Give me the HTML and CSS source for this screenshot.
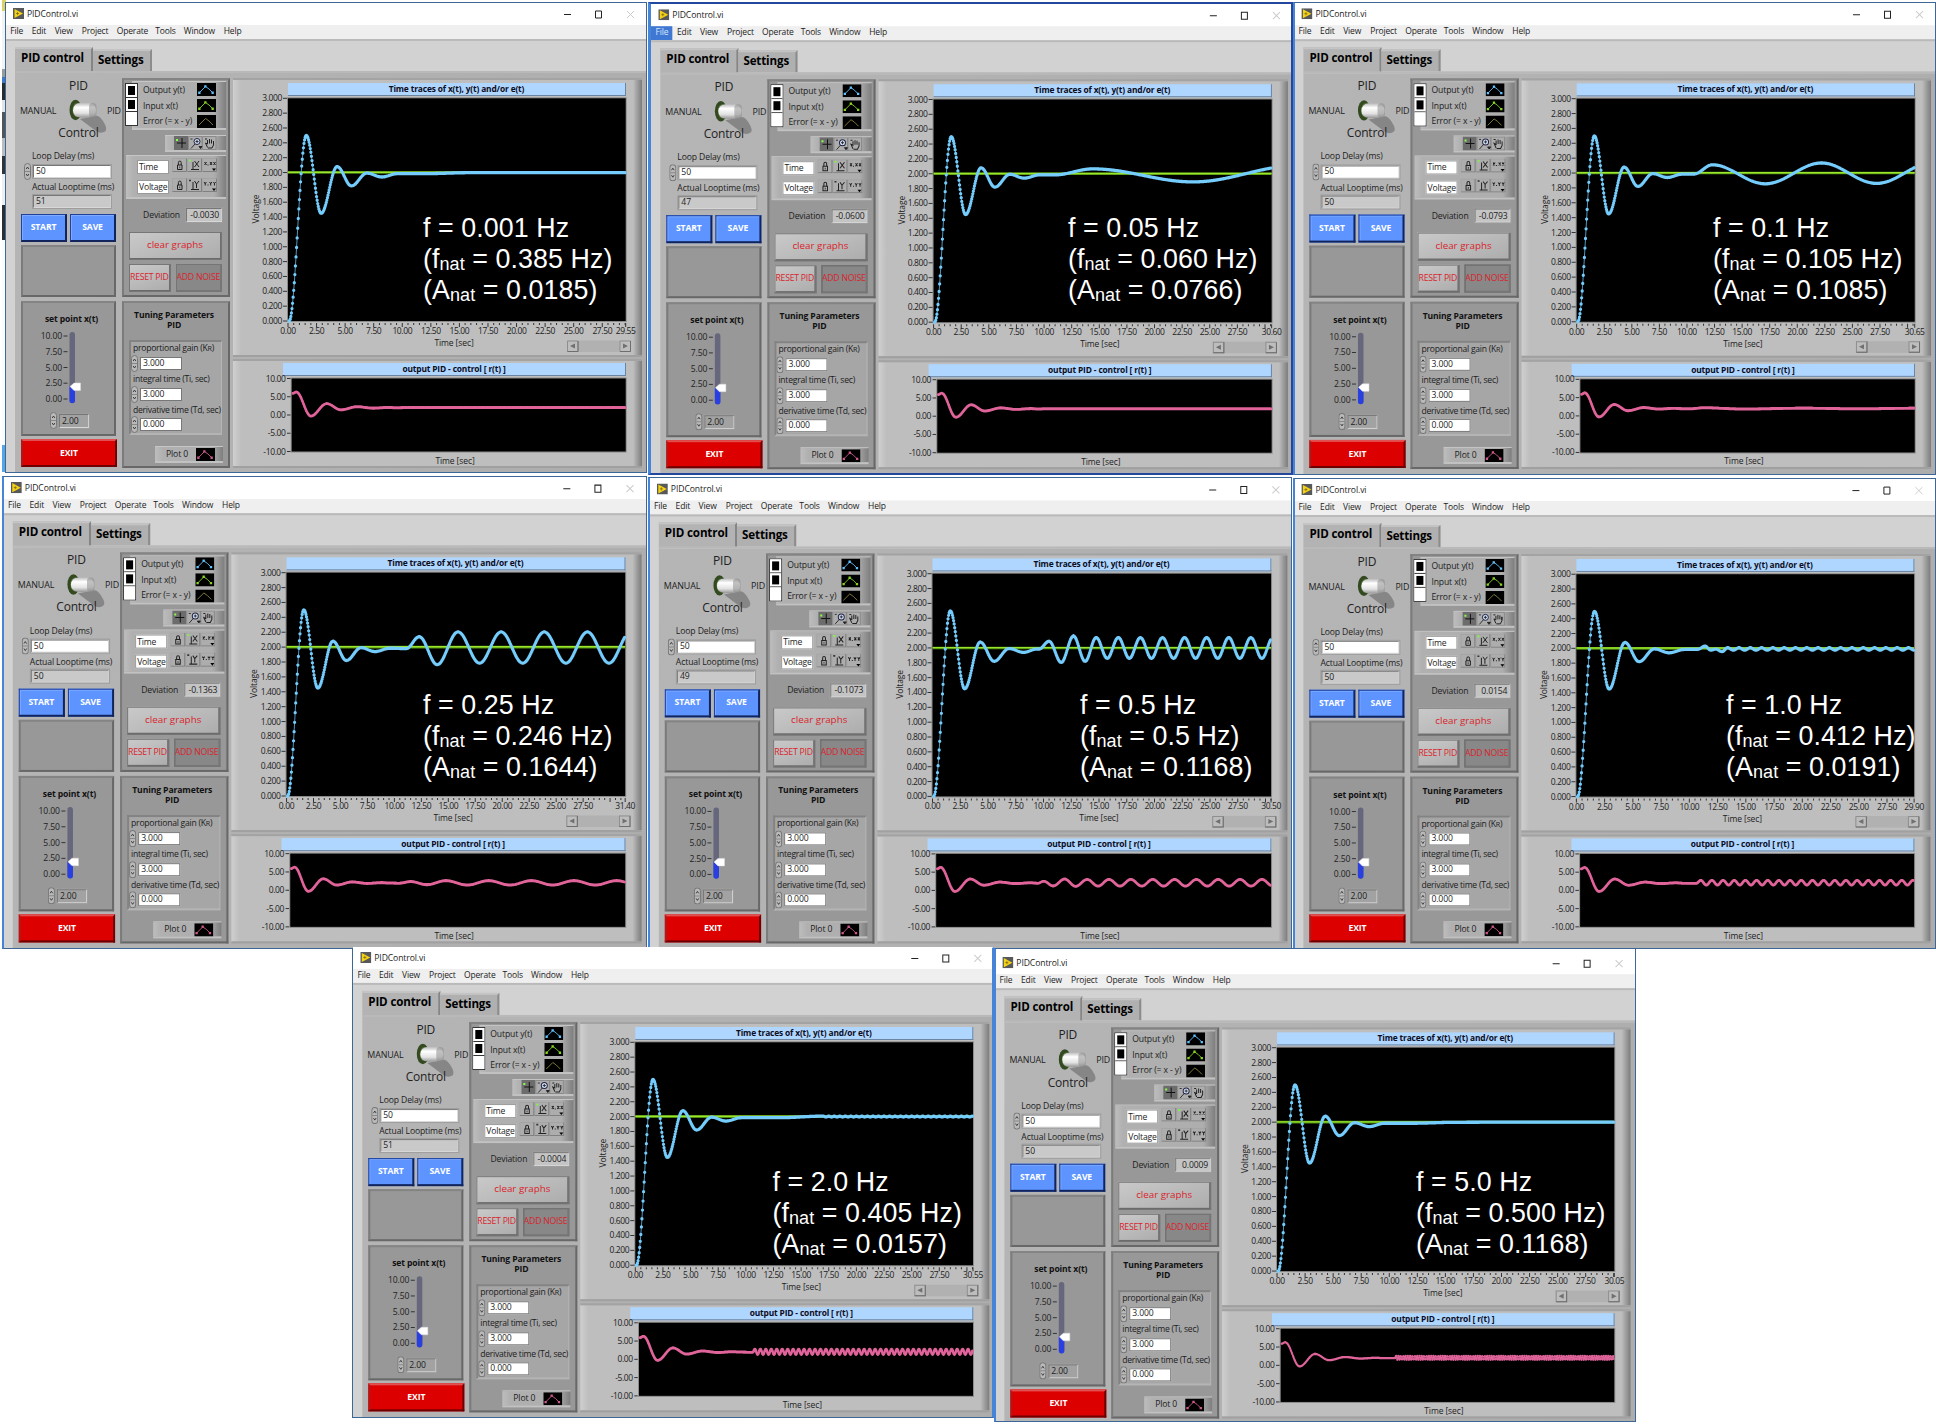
FILE: index.html
```html
<!DOCTYPE html>
<html lang="en">
<head>
<meta charset="utf-8">
<title>PIDControl.vi</title>
<link rel="stylesheet" href="styles.css">
</head>
<body>
<main class="desktop" id="desktop">
  <div class="sliver"></div>
</main>
<script src="app.js"></script>
</body>
</html>
```
FILE: styles.css
```css
* { box-sizing: border-box; }
body {
  margin: 0;
  background: #fff;
  font-family: "Open Sans", "Noto Sans", sans-serif;
  font-size: 8.6px;
  letter-spacing: -0.12px;
  color: #1c1c1c;
}
.desktop { position: relative; width: 1936px; height: 1424px; overflow: hidden; }
.sliver {
  position: absolute; left: 2px; top: 0; width: 4px; height: 472px;
  background: linear-gradient(#d9d268 0 11px, #f3f3f3 11px 69px, #9a9a9a 69px 77px, #3f78c8 77px 83px, #2b2b2b 83px 100px, #e4e4e4 100px 112px, #555 112px 138px, #bdbdbd 138px 156px, #333 156px 174px, #efefef 174px 205px, #2e2e2e 205px 240px, #fafafa 240px 445px, #57a5e6 445px);
}

/* windows on the desktop */
.win { position: absolute; overflow: hidden; background: #fff; border: 1px solid #3d6796; }
.win.active { border: 2px solid #23479c; border-left: 3px solid #4584d6; }
.win.blue-left { border-left: 2px solid #4584d6; }
.win.edge-right { border-top-color: #fff; border-right: 2px solid #4584d6; }
.vi { width: 642px; height: 471px; display: flex; flex-direction: column; transform-origin: 0 0; }
.title { height: 23px; flex: none; display: flex; align-items: center; padding: 0 10px 0 8px; background: #fff; font-size: 8.6px; }
.title .logo { width: 11px; height: 11px; margin-right: 3px; }
.title .name { flex: 1; letter-spacing: -0.1px; }
.title .sys { width: 76px; height: 10px; }
.menu { height: 14px; flex: none; display: grid; grid-template-columns: 21.5px 23px 27px 35px 38.5px 28.5px 40px 24px; padding-left: 0; background: #efefef; line-height: 12px; font-size: 8.5px; letter-spacing: -0.15px; }
.menu span { padding-left: 5.2px; white-space: nowrap; }
.menu .hot { background: #3f78d2; color: #d8e6ff; }
.front { flex: 1; background: #d2d2d2; border-top: 2px solid #bababa; padding: 6px 0 0 10px; display: flex; flex-direction: column; }
.tabs { display: flex; align-items: flex-end; height: 24px; flex: none; font-weight: 700; font-size: 11.6px; letter-spacing: -0.15px; color: #000; }
.tab { height: 22px; line-height: 18px; background: #b0b0b0; border-top: 2px solid #c4c4c4; border-right: 2px solid #8c8c8c; padding-left: 5px; width: 59px; white-space: nowrap; }
.tab.on { height: 25px; width: 78px; padding-left: 6px; background: #b3b3b3; border-right-color: #858585; margin-bottom: -1px; }
.page { flex: 1; display: grid; grid-template-columns: 107px 108px 409px; column-gap: 0; background: linear-gradient(100deg, #b5b5b5, #adadad); border-top: 2px solid #b9b9b9; padding-top: 5px; align-content: start; }
.col { display: flex; flex-direction: column; height: 390px; white-space: nowrap; }

/* left column */
.left { padding: 0 6px 0 6px; }
.mode { height: 69px; position: relative; display: grid; grid-template-rows: 16px 32px 16px; font-size: 8.9px; }
.mode .big { font-size: 12px; letter-spacing: -0.2px; text-align: center; line-height: 16px; padding-left: 15px; color: #222; }
.mode .ctl { line-height: 13px; }
.mode .row { display: flex; align-items: center; margin-left: -1px; }
.mode .row .m { width: 48px; }
.mode .row svg { width: 39px; height: 34px; overflow: visible; margin-top: 11px; }
.mode .row .p { margin-left: 0; }
.lab { height: 12px; line-height: 10px; padding-left: 11px; margin-top: 4px; }
.lab.act { margin-top: 2px; line-height: 11px; }
.num { display: flex; height: 17px; align-items: center; gap: 2px; padding-left: 3px; }
.spin { width: 7px; height: 17px; flex: none; }
.box { background: #fff; border: 1px solid #777; border-right-color: #cfcfcf; border-bottom-color: #d8d8d8; outline: 1px solid #9d9d9d; outline-offset: 0; height: 13px; line-height: 11px; padding-left: 2px; }
.box.ro { background: #c9c9c9; }
.num .box { flex: 1; margin-right: 5px; }
.act-box { margin: 1px 5px 1px 12px; height: 13px; }
.pair { display: flex; gap: 3px; margin-top: 5px; }
.btn { height: 28px; width: 46px; text-align: center; line-height: 25px; color: #fff; font-weight: 700; background: #5d94ff; border: 1px solid #20409a; border-right: 2px solid #12245c; border-bottom: 2px solid #12245c; box-shadow: inset 1px 1px 0 #7fabff; font-size: 8.6px; }
.sunk { background: #989898; border: 2px solid #7b7b7b; border-top-color: #848484; border-right-color: #686868; border-bottom-color: #686868; }
.blank { height: 52px; margin-top: 3px; width: 95px; }
.setp { height: 135px; width: 95px; margin-top: 4px; padding: 10px 0 0 0; }
.setp .h { font-weight: 700; text-align: center; line-height: 13px; height: 17px; padding-left: 6px; color: #111; }
.slider { display: block; width: 91px; height: 82px; overflow: visible; }
.setp .num { padding: 0 25px 0 27px; margin-top: 0; }
.setp .num .box { background: #a2a2a2; margin-right: 0; height: 14px; line-height: 12px; }
.exit { width: 96px; height: 28px; margin-top: 3px; background: #dc0000; color: #fff; font-weight: 700; text-align: center; line-height: 24px; border: 2px solid #b01818; border-top-color: #e05050; border-right-color: #6d0000; border-bottom-color: #6d0000; }

/* middle column */
.tools { height: 220px; width: 108px; padding: 2px 2px 0 1px; }
.legend { display: flex; height: 47px; }
.checks { width: 13px; height: 43px; border: 1px solid #333; background: #fff; display: grid; grid-template-rows: 1fr 1fr 1fr; margin-top: 1px; z-index: 1; }
.checks i { border-bottom: 1px solid #333; background: #fff; display: block; padding: 2px; }
.checks i b { display: block; width: 7px; height: 9px; background: #000; margin: 0 auto; }
.checks i:last-child { border: 0; }
.raised { background: linear-gradient(90deg, #bdbdbd, #b0b0b0 8px, #aeaeae calc(100% - 12px), #7e7e7e); border-top: 1px solid #c6c6c6; border-bottom: 2px solid #c2c2c2; }
.items { flex: 1; margin: -1px 0 -1px -6px; padding: 0 10px 0 11px; display: grid; grid-template-rows: 15.8px 15.8px 15.8px; }
.items div { display: flex; justify-content: space-between; align-items: center; }
.items svg, .plot0 svg { width: 19px; height: 13px; flex: none; }
.palette { width: 61px; height: 17px; margin: 5.5px 0 0 40px; padding: 0 0 0 9px; }
.palette svg { display: block; width: 43px; height: 14px; }
.scales { margin: 3.5px 0 0 1px; height: 44px; padding: 2px 0 0 11px; display: grid; grid-template-rows: 19.6px 20px; }
.scales div { display: flex; gap: 3px; }
.scales .box { width: 32px; height: 14px; line-height: 12px; outline: 0; margin-top: 2px; border-color: #999; padding-left: 1px; letter-spacing: -0.2px; }
.scales svg { width: 45px; height: 14px; }
.dev { display: flex; justify-content: flex-end; align-items: center; gap: 6px; height: 14px; margin: 9px 4px 0 0; }
.dev .box { width: 36px; height: 14px; line-height: 12px; text-align: right; padding-right: 2px; background: #c4c4c4; }
.gbtn { background: linear-gradient(160deg, #c9c9c9, #adadad); border: 1px solid #dcdcdc; border-right: 2px solid #6f6f6f; border-bottom: 2px solid #6a6a6a; outline: 1px solid #767676; outline-offset: -1px; color: #d9242c; text-align: center; line-height: 24px; height: 28px; }
.clear { margin: 10px 4px 0 4px; font-size: 9.8px; letter-spacing: 0; }
.two { display: flex; gap: 5px; margin: 4px 4px 0 4px; letter-spacing: -0.25px; }
.two .gbtn { width: 43px; font-size: 8.7px; white-space: nowrap; }
.two .gbtn.dn { width: 48px; background: #888; border-color: #616161; border-right-color: #777; border-bottom-color: #777; }
.tune { margin-top: 4px; height: 167px; width: 108px; padding: 7px 5px 0 5px; display: flex; flex-direction: column; }
.tune .h { text-align: center; font-weight: 700; line-height: 10px; height: 30px; color: #111; padding-right: 4px; }
.cluster { background: #a6a6a6; border: 2px solid #838383; border-right: 1px solid #b4b4b4; border-bottom-color: #b4b4b4; height: 95px; width: 93px; padding: 0; }
.cluster p { margin: 0; line-height: 12px; height: 13px; padding-left: 2px; letter-spacing: -0.26px; }
.cluster .num { padding: 0; height: 17.6px; gap: 2px; margin-top: -.5px; margin-bottom: .5px; }
.cluster .num .box { flex: none; width: 42px; outline: 0; border-color: #777; }
.plot0 { align-self: flex-end; display: flex; align-items: center; width: 68px; height: 17px; margin-top: 11px; padding-left: 11px; gap: 8px; }

/* right column */
.right { padding-left: 3px; width: 409px; }
.gp { background: linear-gradient(90deg, #cfcfcf, #bebebe 8px, #bebebe 400px, #7c7c7c 409px); border-top: 2px solid #a3a3a3; border-bottom: 2px solid #a0a0a0; width: 409px; }
.gp .bar { background: #afd6ff; border-bottom: 1px solid #6c84a0; border-right: 1px solid #6c84a0; text-align: center; font-weight: 700; line-height: 11px; height: 13px; color: #0c0c1c; font-size: 8.4px; letter-spacing: -0.15px; }
.g1 { height: 280px; padding-top: 3px; }
.g1 .bar { margin: 0 16px 0 55px; }
.g2 { height: 109px; margin-top: 2px; padding-top: 2px; }
.g2 .bar { margin: 0 16px 0 50px; }
.gp svg { display: block; overflow: visible; font-size: 8.5px; letter-spacing: -0.38px; fill: #1c1c1c; }

/* annotations laid over the graphs */
.note { position: absolute; color: #fff; font: 26.8px/31.4px "Liberation Sans", Arial, sans-serif; letter-spacing: 0.08px; white-space: nowrap; }
.note sub { font-size: 18px; line-height: 0; vertical-align: -2px; }
```
FILE: app.js
```js
// Each run: frame rectangle, origin and scale of the panel, readings, and annotation
const runs = [
  { f: [5, 2, 642, 471], o: [5, 2], s: [1, 1], cls: '', max: 29.55, loop: 51, dev: '-0.0030', note: [423, 212.5, '0.001', '0.385', '0.0185'] },
  { f: [648, 2, 645, 473], o: [650.3, 3.2], s: [1.001, 1], cls: 'active', hot: 1, max: 30.6, loop: 47, dev: '-0.0600', note: [1068, 212.5, '0.05', '0.060', '0.0766'],
    y: [[11, 1.985], [14.4, 2.065], [23.5, 1.89], [33, 2.11]] },
  { f: [1293, 2, 643, 473], o: [1293.4, 2.2], s: [1.001, 1.0017], cls: 'blue-left', max: 30.65, loop: 50, dev: '-0.0793', note: [1713, 212.5, '0.1', '0.105', '0.1085'],
    y: [[10.6, 1.985], [12.3, 2.11], [17.1, 1.855], [22.2, 2.135], [27.2, 1.86], [32.2, 2.135]], r: [[10, 1.9], [11.3, 2.2], [15, 1.85], [20.5, 2.1], [25.5, 1.9], [31, 2.1]] },
  { f: [2, 476, 645, 473], o: [2.75, 476.1], s: [1.0028, 1.0028], cls: 'blue-left', max: 31.4, loop: 50, dev: '-0.1363', note: [423, 689.5, '0.25', '0.246', '0.1644'],
    y: [[11.1, 1.98], [12.3, 2.14], [13.97, 1.765]], yp: [15.9, 2.205, 1.785, 4],
    r: [[10.2, 1.9], [11.3, 2.35], [12.8, 1.5]], rp: [14.6, 2.6, 1.4, 4] },
  { f: [648, 477, 644, 472], o: [648.8, 477.4], s: [1.0025, 1], cls: 'blue-left', max: 30.5, loop: 49, dev: '-0.1073', note: [1080, 689.5, '0.5', '0.5', '0.1168'],
    y: [[9.4, 1.985], [10.5, 2.09], [11.6, 1.805], [12.7, 2.16], [13.75, 1.82]], yp: [14.75, 2.14, 1.86, 1.99],
    r: [[9.2, 1.9], [9.8, 2.5], [10.65, 1.2], [11.7, 3.1], [12.7, 1.1]], rp: [13.75, 3, 1.15, 1.99] },
  { f: [1293, 478, 643, 471], o: [1293.4, 478.1], s: [1, 0.9983], cls: 'blue-left', max: 29.9, loop: 50, dev: '0.0154', note: [1726, 689.5, '1.0', '0.412', '0.0191'],
    y: [[10.7, 1.985], [11.4, 2.03], [11.9, 1.975], [12.35, 1.99], [12.9, 1.955]], yp: [13.4, 2.01, 1.975, 1],
    r: [[10.4, 1.9]], rp: [10.8, 2.75, 1.45, 1] },
  { f: [352, 947, 642, 471], o: [352.3, 945.9], s: [1, 1.001], cls: 'edge-right', max: 30.55, loop: 51, dev: '-0.0004', note: [772.5, 1166.5, '2.0', '0.405', '0.0157'],
    y: [[13, 1.985]], yp: [17, 2.006, 1.994, 0.5], r: [[10.4, 1.9]], rp: [10.6, 2.8, 1.3, 0.5] },
  { f: [994, 948, 642, 474], o: [994.4, 951.1], s: [0.9987, 1.003], cls: 'blue-left', max: 30.05, loop: 50, dev: '0.0009', note: [1416, 1166.5, '5.0', '0.500', '0.1168'],
    r: [[10.3, 1.95]], rp: [10.4, 2.6, 1.5, 0.21] }
];

const STEP_Y = [[0, 0], [0.1, 0], [1.6, 2.5], [2.9, 1.45], [4.3, 2.08], [5.55, 1.82], [6.9, 1.992], [8.2, 1.94], [9.6, 1.985]];
const STEP_R = [[0.1, 5.9], [0.4, 6.3], [1.7, -0.3], [3.1, 3.1], [4.35, 1.4], [5.8, 2.25], [7.2, 1.85], [8.6, 2.05], [9.2, 1.95]];

// Turning points of a trace: step response, then the forced part
function turning(step, extra, per, rest) {
  const pts = step.slice();
  (extra || []).forEach(p => pts.push(p));
  if (per) for (let t = per[0]; t < 34; t += per[3]) { pts.push([t, per[1]]); pts.push([t + per[3] / 2, per[2]]); }
  if (!per && !(extra && extra.length)) rest.forEach(p => pts.push(p));
  return pts.sort((a, b) => a[0] - b[0]);
}
function at(pts, t) {
  for (let i = 1; i < pts.length; i++) if (t <= pts[i][0]) {
    const a = pts[i - 1], b = pts[i], u = Math.max(0, (t - a[0]) / (b[0] - a[0]));
    return a[1] + (b[1] - a[1]) * (1 - Math.cos(Math.PI * u)) / 2;
  }
  return pts[pts.length - 1][1];
}
function samples(pts, max, fx, fy) {
  const out = [];
  for (let t = 0.1; t <= max; t += 0.05) out.push([fx(t).toFixed(2), fy(at(pts, t)).toFixed(2)]);
  return out;
}
const line = p => 'M' + p.map(q => q.join(' ')).join('L');
const dots = p => p.map(q => 'M' + q.join(' ') + 'h0').join('');

function mainGraph(run) {
  const X = 55, W = 337.7, Y = 2.3, H = 222.7, fx = t => X + t / run.max * W, fy = v => Y + H - v / 3 * H;
  const p = samples(turning(STEP_Y, run.y, run.yp, [[12, 1.985], [16, 1.998], [20, 2]]), run.max, fx, fy);
  let s = `<rect x="${X - 1}" y="${Y - 1}" width="${W + 2}" height="${H + 2}" fill="#8b8b8b"/><rect x="${X}" y="${Y}" width="${W}" height="${H}" fill="#000"/>`;
  for (let i = 0; i <= 15; i++) {
    const v = i * 0.2;
    s += `<text x="49" y="${fy(v) + 3}" text-anchor="end">${v.toFixed(3)}</text><path d="M50 ${fy(v)}h4" stroke="#333" stroke-width="1"/>`;
  }
  for (let t = 0; t <= run.max; t += 0.5) {
    const major = t % 2.5 === 0;
    s += `<path d="M${fx(t)} ${Y + H + 2}v${major ? 4 : 2}" stroke="#333" stroke-width="1"/>`;
    if (major && run.max - t > 1.5) s += `<text x="${fx(t)}" y="${Y + H + 13}" text-anchor="middle">${t.toFixed(2)}</text>`;
  }
  s += `<path d="M${X + W} ${Y + H + 2}v4" stroke="#333"/><text x="${X + W}" y="${Y + H + 13}" text-anchor="middle">${run.max.toFixed(2)}</text>`;
  s += `<path d="M${X} ${fy(2)}h${W}" stroke="#4f8f10" stroke-width="2.6"/><path d="M${X} ${fy(2) - 0.3}h${W}" stroke="#9be52a" stroke-width="1.4"/>`;
  s += `<path d="${line(p)}" fill="none" stroke="#62bdf0" stroke-width="0.8"/><path d="${dots(p)}" stroke="#74cdfd" stroke-width="3.3" stroke-linecap="round"/>`;
  s += `<text x="221" y="${Y + H + 25}" text-anchor="middle" letter-spacing="-.1">Time [sec]</text><text transform="translate(26 113) rotate(-90)" text-anchor="middle" letter-spacing="-.1">Voltage</text>`;
  s += `<g><rect x="334" y="244.500" width="64" height="11.500" fill="#b1b1b1"/><path d="M334.500 245h10.500v10.500h-10.500zM387 245h10.500v10.500H387z" fill="#bdbdbd" stroke="#8f8f8f"/><path d="M334.500 255.500h10.500V245M387 255.500h10.500V245" fill="none" stroke="#6e6e6e"/><path d="M342 247.500v5l-5-2.500zM390 247.500v5l5-2.500z" fill="#707070"/></g>`;
  return `<svg width="409" height="258">${s}</svg>`;
}
function outGraph(run) {
  const X = 58.7, W = 334, Y = 2.5, H = 73, fx = t => X + t / run.max * W, fy = v => Y + H / 2 - v / 20 * H;
  const p = samples(turning(STEP_R, run.r, run.rp, [[10, 2], [11, 2]]), run.max, fx, fy);
  let s = `<rect x="${X - 1}" y="${Y - 1}" width="${W + 2}" height="${H + 2}" fill="#8b8b8b"/><rect x="${X}" y="${Y}" width="${W}" height="${H}" fill="#000"/>`;
  for (const v of [10, 5, 0, -5, -10]) s += `<text x="52.500" y="${fy(v) + 3}" text-anchor="end">${v.toFixed(2)}</text><path d="M54 ${fy(v)}h3.500" stroke="#333"/>`;
  const fine = run.rp && run.rp[3] < 0.3;
  s += `<path d="${line(p)}" fill="none" stroke="#e0649a" stroke-width="${fine ? 0.9 : 1.6}"/><path d="${dots(p)}" stroke="#e0649a" stroke-width="${fine ? 2.3 : 2.8}" stroke-linecap="round"/>`;
  s += `<text x="222" y="${Y + H + 12}" text-anchor="middle" letter-spacing="-.1">Time [sec]</text>`;
  return `<svg width="409" height="90">${s}</svg>`;
}

const swatch = (c, d) => `<svg viewBox="0 0 19 13"><path d="M0 0h19v13H0z" fill="#000"/><path d="M2 10L8.500 3.500 12 6l4 4" fill="none" stroke="${c}" stroke-width=".9"/>${d ? `<path d="M1.200 8.600h2.300v2.300H1.200zM7.200 2.200h2.300v2.300H7.200zM14.500 8.600h2.300v2.300h-2.300z" fill="${c}"/>` : ''}</svg>`;
const spin = '<svg class="spin" viewBox="0 0 7 17"><rect x=".5" y=".5" width="6" height="16" rx="3" fill="#b9b9b9" stroke="#777"/><path d="M1 8.500h5" stroke="#888"/><path d="M2.200 6L3.500 4 4.800 6M2.200 11l1.300 2 1.300-2" fill="none" stroke="#333" stroke-width=".9"/></svg>';
const logo = '<svg class="logo" viewBox="0 0 11 11"><path d="M0 0h11v11H0z" fill="#57585a"/><path d="M1.500 1l8.500 4.500L1.500 10z" fill="#f6d214"/><path d="M3 5.500h3M4.500 4v3" stroke="#7a6a20" stroke-width=".8"/></svg>';
const sys = '<svg class="sys" viewBox="0 0 76 10"><path d="M3 5.500h7" stroke="#222"/><path d="M34.500 2h6v7h-6z" fill="none" stroke="#222"/><path d="M66 2l7 7M73 2l-7 7" stroke="#ccc"/></svg>';
const knob = `<svg viewBox="0 0 39 34"><path d="M12 20L27 17q4-1 8 5 6 9 1 11-4 2-8-1z" fill="#868686"/><ellipse cx="7.500" cy="11" rx="6" ry="10.200" fill="#33491f"/><ellipse cx="9" cy="11" rx="4.500" ry="7" fill="#5e7545"/><rect x="5" y="4" width="23" height="14.500" rx="7" fill="url(#kg)"/><rect x="21" y="4" width="7.500" height="14.500" rx="3.500" fill="#8e8e8e" opacity=".55"/></svg>`;
const tri = '<path d="M40 10.500h4l-2 2.500z"/>';
const frame3 = '<path d="M.5.5h14v13H.5zM15.500.5h14v13h-14zM30.500.5h14v13h-14z" fill="#adadad" stroke="#a4a4a4"/><path d="M.5 13.500h14V.5M15.500 13.500h14V.5M30.500 13.500h14V.5" fill="none" stroke="#808080"/>';
const lock = '<path d="M5.500 7h4.500v4.500H5.500zM6.400 7V4.500a1.400 1.400 0 0 1 2.800 0V7" fill="none" stroke="#222" stroke-width="1"/><path d="M7.750 8.500v1.800" stroke="#222" stroke-width=".8"/>';
const axisIcon = (c, lit, pts) => `<svg viewBox="0 0 45 14">${frame3}${lock}<path d="M17 2.500h2" stroke="${lit ? '#7f3' : '#333'}" stroke-width="1.600"/><path d="M21 4v7M19 11.500h8" stroke="#222"/>${c === 'x' ? '<path d="M22.500 3l4.500 6M27 3l-4.500 6" stroke="#222"/>' : '<path d="M22.500 3l2 3 2.500-3M24.500 6v4" stroke="#222" fill="none"/>'}${pts}${tri}</svg>`;
const fmtX = '<path d="M32.500 4l2 3M34.500 4l-2 3M38 4l2 3M40 4l-2 3M41.500 4l2 3M43.500 4l-2 3M36 6.500v1" stroke="#222"/>';
const fmtY = '<path d="M32 4l1.200 1.500L34.400 4M33.200 5v2.500M37.500 4l1.200 1.500L39.900 4M38.700 5v2.500M41.300 4l1.200 1.500L43.700 4M42.500 5v2.500M36 6.500v1" stroke="#222" fill="none"/>';
const palette = `<svg viewBox="0 0 43 14"><path d="M0 0h14v14H0z" fill="#6c6c6c"/><path d="M8 2v10M3 7h9" stroke="#111"/><path d="M2 4h2" stroke="#8f4" stroke-width="2"/><path d="M14.500.5h13.500v13H14.500zM28.500.5H42v13H28.500z" fill="#adadad" stroke="#8a8a8a"/><circle cx="23" cy="5.500" r="3" fill="#cfe0f5" stroke="#224"/><path d="M21 8l-4 4.500M23 4v3M21.500 5.500h3M16.500 3h2M25 10.500h3l-1.500 2z" stroke="#222" fill="#222" stroke-width=".9"/><path d="M31 3h2M33.500 11.500L31.500 7l2 1V4M35.500 7.500V3M37.500 7.500V3.500M39.500 8V5v4l-1.500 3h-4" fill="none" stroke="#222"/></svg>`;
function slider() {
  let s = '';
  [['10.00', 6], ['7.50', 21.7], ['5.00', 37.5], ['2.50', 53.2], ['0.00', 69]].forEach(([t, y]) => { s += `<text x="39" y="${y + 3}" text-anchor="end" fill="#222">${t}</text><path d="M40.500 ${y}h4" stroke="#333"/>`; });
  return `<svg class="slider" viewBox="0 0 91 82">${s}<rect x="46.500" y="2" width="5.500" height="71" rx="2.700" fill="#66667c"/><path d="M46.500 56h5.500v14.500a2.750 2.750 0 0 1-5.500 0z" fill="#2a3fe0"/><path d="M47 56.500l4-3.500h6.500v7.500H51z" fill="#fff" stroke="#ddd" stroke-width=".5"/></svg>`;
}

const num = (v, c = '') => `<div class="num">${spin}<div class="box ${c}">${v}</div></div>`;
function windowHtml(r) {
  const b = r.cls === 'active' ? [3, 2] : r.cls === 'blue-left' ? [2, 1] : [1, 1];
  const dx = r.o[0] - r.f[0] - b[0], dy = r.o[1] - r.f[1] - b[1];
  const menu = ['File', 'Edit', 'View', 'Project', 'Operate', 'Tools', 'Window', 'Help'].map((m, i) => `<span${r.hot && !i ? ' class="hot"' : ''}>${m}</span>`).join('');
  return `<section class="win ${r.cls}" style="left:${r.f[0]}px;top:${r.f[1]}px;width:${r.f[2]}px;height:${r.f[3]}px">
<div class="vi" style="transform:translate(${dx}px,${dy}px) scale(${r.s[0]},${r.s[1]})">
<header class="title">${logo}<span class="name">PIDControl.vi</span>${sys}</header>
<nav class="menu">${menu}</nav>
<div class="front">
<div class="tabs"><div class="tab on">PID control</div><div class="tab">Settings</div></div>
<div class="page">
<div class="col left">
<div class="mode"><div class="big">PID</div><div class="row"><span class="m">MANUAL</span>${knob}<span class="p">PID</span></div><div class="big ctl">Control</div></div>
<div class="lab">Loop Delay (ms)</div>${num('50')}
<div class="lab act">Actual Looptime (ms)</div><div class="box ro act-box">${r.loop}</div>
<div class="pair"><div class="btn">START</div><div class="btn">SAVE</div></div>
<div class="sunk blank"></div>
<div class="sunk setp"><div class="h">set point x(t)</div>${slider()}${num('2.00')}</div>
<div class="exit">EXIT</div>
</div>
<div class="col">
<div class="sunk tools">
<div class="legend"><div class="checks"><i><b></b></i><i><b></b></i><i></i></div><div class="raised items"><div>Output y(t)${swatch('#62c4ff', 1)}</div><div>Input x(t)${swatch('#86d81f', 1)}</div><div>Error (= x - y)${swatch('#8d8340', 0)}</div></div></div>
<div class="raised palette">${palette}</div>
<div class="raised scales"><div><span class="box">Time</span>${axisIcon('x', 1, fmtX)}</div><div><span class="box">Voltage</span>${axisIcon('y', 0, fmtY)}</div></div>
<div class="dev">Deviation<span class="box">${r.dev}</span></div>
<div class="gbtn clear">clear graphs</div>
<div class="two"><div class="gbtn">RESET PID</div><div class="gbtn dn">ADD NOISE</div></div>
</div>
<div class="sunk tune"><div class="h">Tuning Parameters<br>PID</div>
<div class="cluster"><p>proportional gain (K<small>R</small>)</p>${num('3.000')}<p>integral time (Ti, sec)</p>${num('3.000')}<p>derivative time (Td, sec)</p>${num('0.000')}</div>
<div class="raised plot0">Plot 0${swatch('#d0588c', 1)}</div></div>
</div>
<div class="col right">
<div class="gp g1"><div class="bar">Time traces of x(t), y(t) and/or e(t)</div>${mainGraph(r)}</div>
<div class="gp g2"><div class="bar">output PID - control [ r(t) ]</div>${outGraph(r)}</div>
</div>
</div></div></div></section>
<div class="note" style="left:${r.note[0]}px;top:${r.note[1]}px">f = ${r.note[2]} Hz<br>(f<sub>nat</sub> = ${r.note[3]} Hz)<br>(A<sub>nat</sub> = ${r.note[4]})</div>`;
}
const defs = '<svg width="0" height="0" style="position:absolute"><linearGradient id="kg" x2="0" y2="1"><stop offset="0" stop-color="#bbb"/><stop offset=".3" stop-color="#fff"/><stop offset=".7" stop-color="#e2e2e2"/><stop offset="1" stop-color="#999"/></linearGradient></svg>';
document.getElementById('desktop').insertAdjacentHTML('beforeend', defs + runs.map(windowHtml).join(''));
```
